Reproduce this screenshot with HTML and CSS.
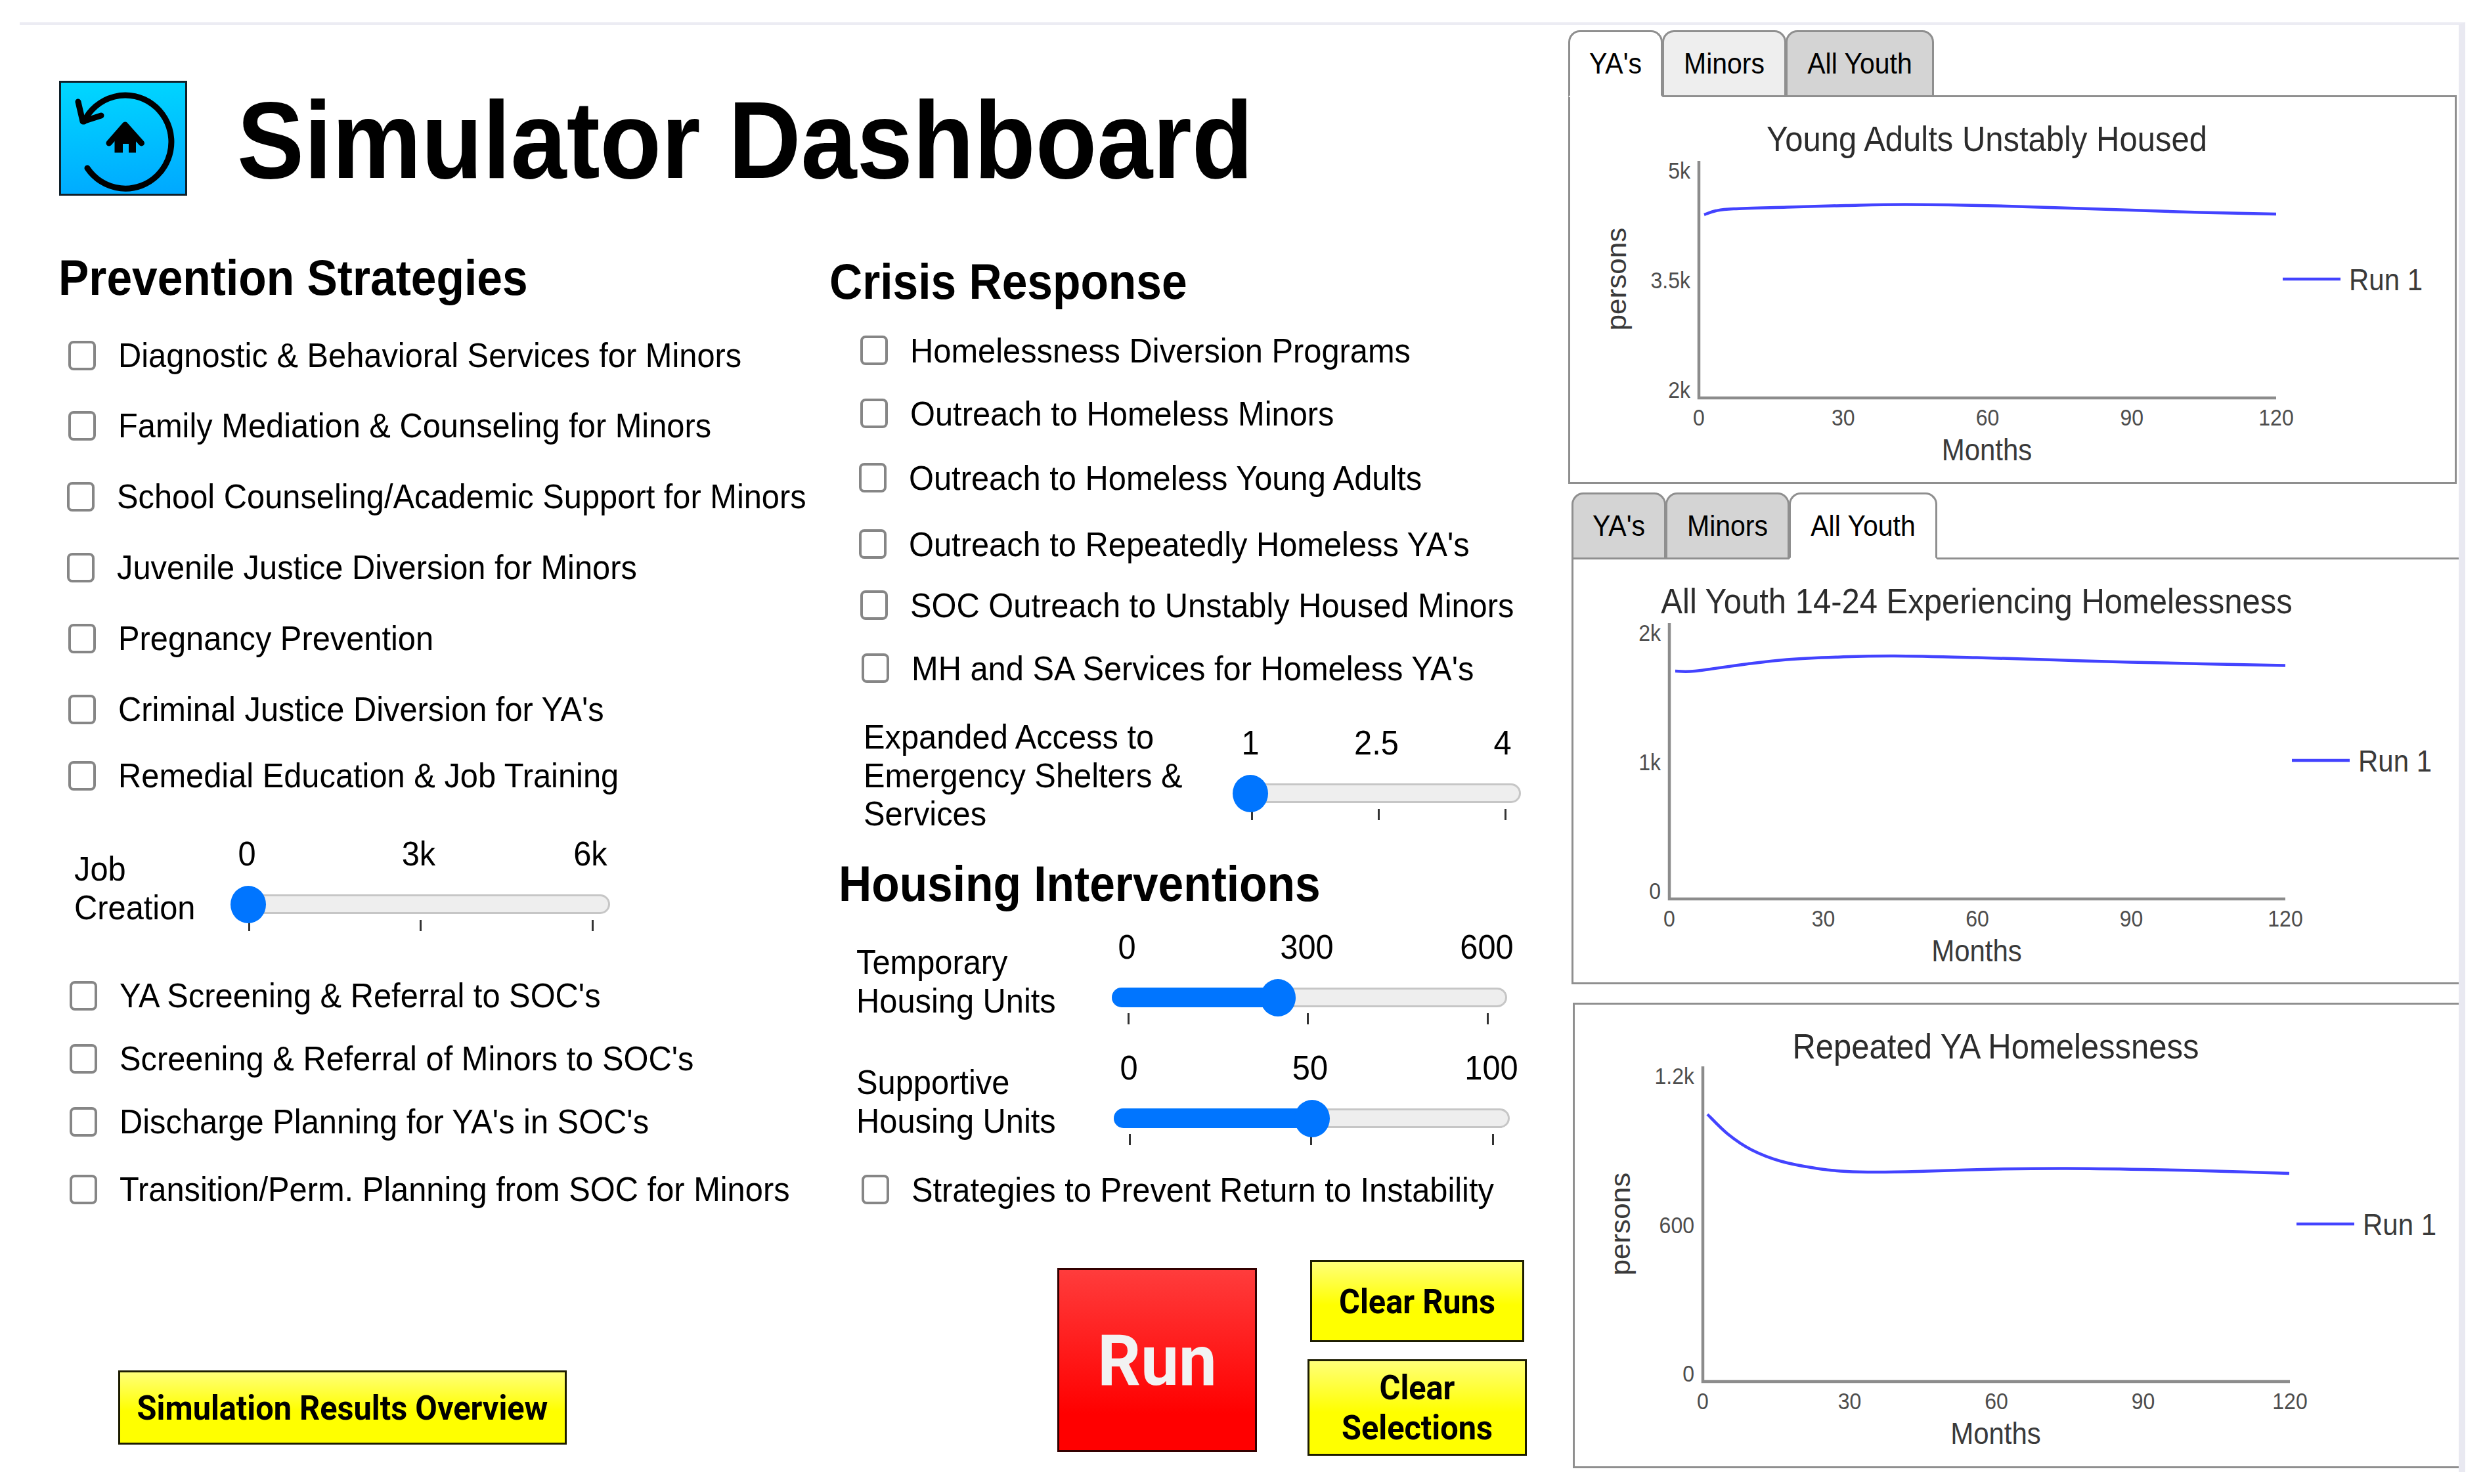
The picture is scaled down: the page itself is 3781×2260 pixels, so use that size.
FILE: index.html
```html
<!DOCTYPE html>
<html lang="en">
<head>
    <meta charset="UTF-8">
    <meta name="viewport" content="width=device-width, initial-scale=1.0">
    <title>Simulator Dashboard</title>
    <link rel="stylesheet" href="styles.css">
</head>
<body>
    <div class="dashboard">
        <div class="controls">
            <header class="header">
                <button class="home-button" aria-label="Start over">
                    <svg viewBox="0 0 195 175">
                        <path d="M38 62 A70 71 0 1 1 43 133" class="stroke"/>
                        <path d="M29 32 L36 62 L64 53" class="stroke"/>
                        <path d="M76 95 L100.500 67 L125.500 95" class="stroke"/>
                        <path d="M84.500 109.500 V88 L100.500 68 L117 88 V109.500 H106 V96 H97 V109.500 Z"/>
                    </svg>
                </button>
                <h1>Simulator Dashboard</h1>
            </header>

            <div class="columns">
                <section class="column prevention">
                    <h2>Prevention Strategies</h2>
                    <label class="check"><input type="checkbox"><span>Diagnostic &amp; Behavioral Services for Minors</span></label>
                    <label class="check"><input type="checkbox"><span>Family Mediation &amp; Counseling for Minors</span></label>
                    <label class="check outdent"><input type="checkbox"><span>School Counseling/Academic Support for Minors</span></label>
                    <label class="check outdent"><input type="checkbox"><span>Juvenile Justice Diversion for Minors</span></label>
                    <label class="check"><input type="checkbox"><span>Pregnancy Prevention</span></label>
                    <label class="check"><input type="checkbox"><span>Criminal Justice Diversion for YA's</span></label>
                    <label class="check"><input type="checkbox"><span>Remedial Education &amp; Job Training</span></label>
                    <div class="slider jobs">
                        <div class="slider-label">Job<br>Creation</div>
                        <div class="slider-control">
                            <div class="scale"><span>0</span><span>3k</span><span>6k</span></div>
                            <div class="track"><div class="thumb"></div></div>
                            <div class="ticks"><i></i><i></i><i></i></div>
                        </div>
                    </div>
                    <label class="check indent"><input type="checkbox"><span>YA Screening &amp; Referral to SOC's</span></label>
                    <label class="check indent"><input type="checkbox"><span>Screening &amp; Referral of Minors to SOC's</span></label>
                    <label class="check indent"><input type="checkbox"><span>Discharge Planning for YA's in SOC's</span></label>
                    <label class="check indent"><input type="checkbox"><span>Transition/Perm. Planning from SOC for Minors</span></label>
                    <button class="button results"><span>Simulation Results Overview</span></button>
                </section>

                <section class="column crisis">
                    <h2>Crisis Response</h2>
                    <label class="check"><input type="checkbox"><span>Homelessness Diversion Programs</span></label>
                    <label class="check"><input type="checkbox"><span>Outreach to Homeless Minors</span></label>
                    <label class="check outdent"><input type="checkbox"><span>Outreach to Homeless Young Adults</span></label>
                    <label class="check outdent"><input type="checkbox"><span>Outreach to Repeatedly Homeless YA's</span></label>
                    <label class="check"><input type="checkbox"><span>SOC Outreach to Unstably Housed Minors</span></label>
                    <label class="check indent"><input type="checkbox"><span>MH and SA Services for Homeless YA's</span></label>
                    <div class="slider shelters">
                        <div class="slider-label">Expanded Access to<br>Emergency Shelters &amp;<br>Services</div>
                        <div class="slider-control">
                            <div class="scale"><span>1</span><span>2.5</span><span>4</span></div>
                            <div class="track"><div class="thumb"></div></div>
                            <div class="ticks"><i></i><i></i><i></i></div>
                        </div>
                    </div>
                    <h2 class="housing">Housing Interventions</h2>
                    <div class="slider temporary">
                        <div class="slider-label">Temporary<br>Housing Units</div>
                        <div class="slider-control">
                            <div class="scale"><span>0</span><span>300</span><span>600</span></div>
                            <div class="track"><div class="fill"></div><div class="thumb"></div></div>
                            <div class="ticks"><i></i><i></i><i></i></div>
                        </div>
                    </div>
                    <div class="slider supportive">
                        <div class="slider-label">Supportive<br>Housing Units</div>
                        <div class="slider-control">
                            <div class="scale"><span>0</span><span>50</span><span>100</span></div>
                            <div class="track"><div class="fill"></div><div class="thumb"></div></div>
                            <div class="ticks"><i></i><i></i><i></i></div>
                        </div>
                    </div>
                    <label class="check indent"><input type="checkbox"><span>Strategies to Prevent Return to Instability</span></label>
                    <div class="actions">
                        <button class="button run"><span>Run</span></button>
                        <div class="clear-buttons">
                            <button class="button clear-runs"><span>Clear Runs</span></button>
                            <button class="button clear-selections"><span>Clear<br>Selections</span></button>
                        </div>
                    </div>
                </section>
            </div>
        </div>

        <div class="charts">
            <div class="chart-group unstable">
                <div class="tabs">
                    <div class="tab active"><span>YA's</span></div>
                    <div class="tab hover"><span>Minors</span></div>
                    <div class="tab"><span>All Youth</span></div>
                </div>
                <div class="panel"><svg class="chart" id="unstableChart"></svg></div>
            </div>
            <div class="chart-group youth">
                <div class="tabs">
                    <div class="tab"><span>YA's</span></div>
                    <div class="tab"><span>Minors</span></div>
                    <div class="tab active"><span>All Youth</span></div>
                </div>
                <div class="panel"><svg class="chart" id="youthChart"></svg></div>
            </div>
            <div class="chart-group repeated">
                <div class="panel"><svg class="chart" id="repeatedChart"></svg></div>
            </div>
        </div>
    </div>

    <script src="charts.js"></script>
</body>
</html>
```
FILE: styles.css
```css
* {
    box-sizing: border-box;
}
body {
    margin: 0;
    background: white;
    color: black;
    font-family: "Liberation Sans", Arial, sans-serif;
    font-size: 48.8px;
    line-height: 59px;
}
.dashboard {
    display: grid;
    grid-template-columns: 2358px 1fr;
    width: 3724px;
    height: 2208px;
    margin: 34px 0 0 30px;
    border-top: 4px solid #ececf3;
    border-right: 10px solid #e9e9f1;
}

/* Header */
.header {
    display: flex;
    height: 342px;
    padding: 85px 0 0 60px;
}
.home-button {
    width: 195px;
    height: 175px;
    padding: 0;
    border: 3px solid #10202a;
    background: linear-gradient(175deg, #00d8ff 0%, #00a8ff 100%);
}
.home-button svg {
    display: block;
    width: 195px;
    height: 175px;
    margin: -3px;
}
.home-button .stroke {
    fill: none;
    stroke: black;
    stroke-width: 9;
    stroke-linecap: round;
    stroke-linejoin: round;
}
h1 {
    margin: 10px 0 0 76px;
    font-size: 153px;
    line-height: 180px;
    white-space: nowrap;
    transform: scaleY(1.09);
    transform-origin: 0 80%;
}
h2 {
    margin: 0;
    font-size: 69.5px;
    line-height: 92px;
    white-space: nowrap;
    transform: scaleY(1.08);
    transform-origin: 0 77%;
}

/* Strategy columns */
.columns {
    display: grid;
    grid-template-columns: 1173px 1fr;
    padding-left: 60px;
}
.column {
    display: grid;
    align-content: start;
}
.prevention {
    grid-template-rows: 107px 108px 107px 108px 108px 108px 108px 94px 240px 96px 96px 96px 110px auto;
}
.prevention h2 {
    margin-left: -1px;
}
.crisis {
    grid-template-rows: 101px 104px 88px 108px 94px 92px 100px 235px 90px 192px 172px 110px auto;
}
.crisis h2 {
    line-height: 103px;
}
.crisis h2.housing {
    padding-left: 14px;
    line-height: 92px;
}
.check {
    display: flex;
    align-items: center;
    padding-left: 14px;
    white-space: nowrap;
}
.check.indent {
    padding-left: 16px;
}
.check.outdent {
    padding-left: 12px;
}
.crisis .check {
    padding-left: 47px;
}
.crisis .check.indent {
    padding-left: 49px;
}
.crisis .check.outdent {
    padding-left: 45px;
}
.check input {
    appearance: none;
    width: 42px;
    height: 45px;
    margin: 0 34px 0 0;
    border: 4px solid #868686;
    border-radius: 8px;
    background: white;
}
.check span,
.scale span,
.tab span {
    transform: translateY(1px) scaleY(1.08);
    transform-origin: 0 79%;
}
.crisis .check span {
    transform: translateY(2px) scaleY(1.08);
}

/* Sliders */
.slider {
    display: grid;
}
.slider-label {
    line-height: 54.6px;
    white-space: nowrap;
    transform: translate(1px, 1px) scaleY(1.08);
    transform-origin: 0 0;
}
.scale,
.ticks {
    display: flex;
    justify-content: space-between;
}
.scale span,
.ticks i {
    display: flex;
    justify-content: center;
    width: 0;
}
.ticks i::before {
    content: "";
    flex: none;
    width: 3px;
    height: 17px;
    background: #333;
}
.track {
    position: relative;
    height: 30px;
    margin: 32px 0 9px;
    border: 3px solid #c6c6c6;
    border-radius: 15px;
    background: #eee;
}
.fill {
    height: 30px;
    margin: -3px;
    border-radius: 15px;
    background: #0075ff;
}
.thumb {
    position: absolute;
    top: -16px;
    width: 54px;
    height: 57px;
    border-radius: 50%;
    background: #0075ff;
}
.jobs {
    grid-template-columns: 240px 577px;
    padding-left: 22px;
}
.jobs .slider-label { margin-top: 64px; }
.jobs .slider-control { padding-top: 43px; }
.jobs .scale { padding: 0 30px 0 24px; }
.jobs .ticks { padding: 0 27px; }
.jobs .thumb { left: -4px; }

.shelters {
    grid-template-columns: 564px 438px;
    padding-left: 51px;
}
.shelters .slider-label { margin-top: 24px; }
.shelters .slider-control { padding-top: 35px; }
.shelters .scale { padding: 0 28px 0 26px; }
.shelters .ticks { padding: 0 24px 0 28px; }
.shelters .thumb { left: -4px; }

.temporary {
    grid-template-columns: 390px 602px;
    padding-left: 40px;
}
.temporary .slider-label { margin-top: 42px; }
.temporary .slider-control { padding-top: 21px; }
.temporary .scale { padding: 0 31px 0 23px; }
.temporary .ticks { padding: 0 30px 0 25px; }
.temporary .fill { width: 253px; }
.temporary .thumb { left: 223px; }

.supportive {
    grid-template-columns: 393px 603px;
    padding-left: 40px;
}
.supportive .slider-label { margin-top: 33px; }
.supportive .slider-control { padding-top: 13px; }
.supportive .scale { padding: 0 28px 0 23px; }
.supportive .ticks { padding: 0 26px 0 24px; }
.supportive .fill { width: 302px; }
.supportive .thumb { left: 272px; }

/* Buttons */
.button {
    display: flex;
    align-items: center;
    justify-content: center;
    padding: 0;
    border: 3px solid #1c1c00;
    background: linear-gradient(#ffff78 0%, #ff0 55%, #ff0 100%);
    color: black;
    font-family: Roboto, sans-serif;
    font-size: 48.7px;
    font-weight: bold;
    line-height: 58px;
}
.button span {
    transform: translateY(1px) scaleY(1.05);
}
.results {
    width: 683px;
    height: 113px;
    margin: 221px 0 0 90px;
}
.actions {
    display: flex;
    align-items: flex-start;
    padding-left: 347px;
}
.run {
    width: 304px;
    height: 280px;
    margin: 65px 77px 0 0;
    border-color: #300;
    background: linear-gradient(#ff3c3c 0%, #f00 80%, #f00 100%);
    color: #f2f2f2;
    font-size: 103px;
}
.clear-buttons {
    display: flex;
    flex-direction: column;
    align-items: center;
    gap: 26px;
    width: 334px;
    padding-top: 53px;
}
.clear-runs {
    width: 326px;
    height: 125px;
}
.clear-selections {
    width: 334px;
    height: 147px;
}

/* Charts */
.charts {
    padding-top: 8px;
}
.tabs {
    display: flex;
    height: 102px;
    margin-bottom: -3px;
    font-size: 41px;
}
.tab {
    display: flex;
    align-items: center;
    justify-content: center;
    width: 189px;
    margin-right: -1px;
    border: 3px solid #8f8f8f;
    border-radius: 18px 18px 0 0;
    background: #d4d4d4;
}
.tab:first-child {
    width: 144px;
}
.tab:last-child {
    width: 226px;
}
.tab.hover {
    background: #eee;
}
.tab.active {
    z-index: 1;
    border-bottom-color: white;
    background: white;
}
.panel {
    border: 3px solid #8f8f8f;
}
.unstable .panel {
    width: 1353px;
    height: 592px;
}
.youth {
    margin: 13px 0 0 5px;
}
.youth .panel {
    height: 650px;
    border-right: none;
}
.repeated {
    margin: 28px 0 0 7px;
}
.repeated .panel {
    height: 709px;
    border-right: none;
}
.chart {
    display: block;
    width: 100%;
    height: 100%;
}
.chart text {
    fill: #3a3a3a;
    font-size: 42px;
}
.chart .title {
    fill: #2c2c2c;
    font-size: 49px;
}
.chart .tick {
    fill: #4d4d4d;
    font-size: 32px;
}
.chart .axis {
    fill: none;
    stroke: #8c8c8c;
    stroke-width: 4.5;
}
.chart .line {
    fill: none;
    stroke: #4343ff;
    stroke-width: 4.5;
}
```
FILE: charts.js
```js
const charts = [
    {
        id: 'unstableChart',
        title: 'Young Adults Unstably Housed',
        yTitle: 'persons',
        yLabels: ['5k', '3.5k', '2k'],
        plot: { left: 196, top: 97, right: 1075, bottom: 458 },
        legendY: 277,
        points: [[204, 179], [222, 173], [249, 170], [330, 167.5], [420, 165], [512, 163.5], [648, 165.5], [854, 172], [960, 175.5], [1075, 178]]
    },
    {
        id: 'youthChart',
        title: 'All Youth 14-24 Experiencing Homelessness',
        yTitle: '',
        yLabels: ['2k', '1k', '0'],
        plot: { left: 146, top: 97, right: 1084, bottom: 517 },
        legendY: 306,
        points: [[155, 170], [185, 170], [262, 159.5], [325, 152.5], [407, 148.5], [489, 147], [614, 149.5], [733, 153], [848, 156.5], [1084, 161.5]]
    },
    {
        id: 'repeatedChart',
        title: 'Repeated YA Homelessness',
        yTitle: 'persons',
        yLabels: ['1.2k', '600', '0'],
        plot: { left: 195, top: 94, right: 1089, bottom: 574 },
        legendY: 334,
        points: [[202, 167], [233, 197], [269, 221], [314, 238.5], [369, 249.5], [414, 254], [460, 255], [523, 254], [641, 250.5], [749, 249.5], [867, 251], [976, 253.5], [1088, 257]]
    }
];

function text(x, y, anchor, cls, value) {
    return `<text class="${cls}" text-anchor="${anchor}" transform="translate(${x} ${y}) scale(1 1.08)">${value}</text>`;
}

// smooth curve through all points
function curve(points) {
    let d = `M${points[0]}`;
    for (let i = 0; i < points.length - 1; i++) {
        const p0 = points[i - 1] || points[i];
        const p1 = points[i];
        const p2 = points[i + 1];
        const p3 = points[i + 2] || p2;
        d += ` C${p1[0] + (p2[0] - p0[0]) / 6},${p1[1] + (p2[1] - p0[1]) / 6}`
            + ` ${p2[0] - (p3[0] - p1[0]) / 6},${p2[1] - (p3[1] - p1[1]) / 6} ${p2}`;
    }
    return d;
}

function drawChart(chart) {
    const { left, top, right, bottom } = chart.plot;
    const center = (left + right) / 2 - 1;
    let out = text(center, 82, 'middle', 'title', chart.title);

    out += `<path class="axis" d="M${left} ${top} V${bottom} H${right}"/>`;

    chart.yLabels.forEach((label, i) => {
        const y = top + 27 + (bottom - top - 27) * i / 2;
        out += text(left - 13, y, 'end', 'tick', label);
    });
    [0, 30, 60, 90, 120].forEach((label, i) => {
        out += text(left + (right - left) * i / 4, bottom + 42, 'middle', 'tick', label);
    });

    out += text(center, bottom + 95, 'middle', 'label', 'Months');
    if (chart.yTitle) {
        out += `<text text-anchor="middle" transform="translate(${left - 111} ${chart.legendY}) rotate(-90) scale(1.05 1)">${chart.yTitle}</text>`;
    }

    out += `<path class="line" d="${curve(chart.points)}"/>`;
    out += `<path class="line" d="M${right + 10} ${chart.legendY} h88"/>`;
    out += text(right + 111, chart.legendY + 17, 'start', 'label', 'Run 1');

    document.getElementById(chart.id).innerHTML = out;
}

charts.forEach(drawChart);
```
